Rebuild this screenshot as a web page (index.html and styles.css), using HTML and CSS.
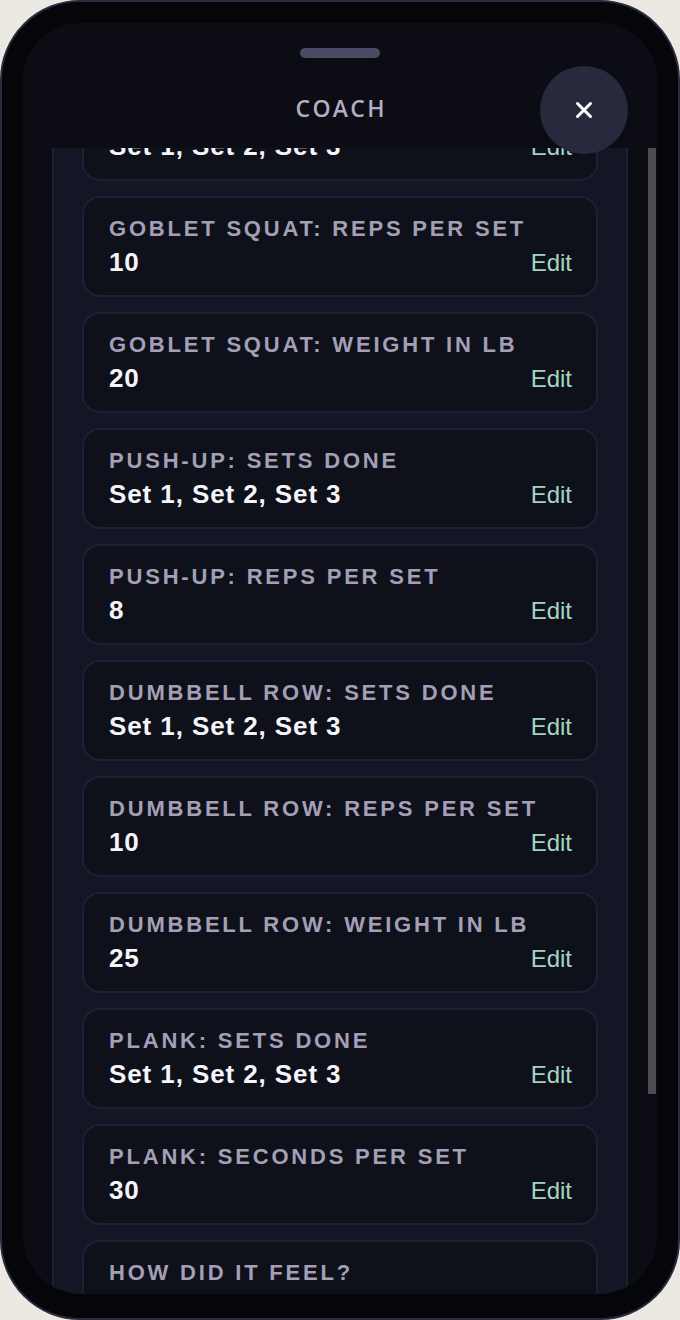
FILE: index.html
```html
<!DOCTYPE html>
<html lang="en">
<head>
<meta charset="utf-8">
<title>Coach</title>
<link rel="stylesheet" href="styles.css">
</head>
<body>
<div class="phone">
  <div class="screen">
    <header class="sheet-header">
      <div class="handle"></div>
      <h1 class="title">COACH</h1>
      <button class="close" aria-label="Close">
        <svg width="18" height="18" viewBox="0 0 18 18"><path d="M2.5 2.5 L15.5 15.5 M15.5 2.5 L2.5 15.5" stroke="#ffffff" stroke-width="3" stroke-linecap="round" fill="none"/></svg>
      </button>
    </header>
    <div class="list">
      <div class="panel">
        <div class="cards">
          <div class="card">
            <div class="label">GOBLET SQUAT: SETS DONE</div>
            <div class="row"><span class="value">Set 1, Set 2, Set 3</span><span class="edit">Edit</span></div>
          </div>
          <div class="card">
            <div class="label">GOBLET SQUAT: REPS PER SET</div>
            <div class="row"><span class="value">10</span><span class="edit">Edit</span></div>
          </div>
          <div class="card">
            <div class="label">GOBLET SQUAT: WEIGHT IN LB</div>
            <div class="row"><span class="value">20</span><span class="edit">Edit</span></div>
          </div>
          <div class="card">
            <div class="label">PUSH-UP: SETS DONE</div>
            <div class="row"><span class="value">Set 1, Set 2, Set 3</span><span class="edit">Edit</span></div>
          </div>
          <div class="card">
            <div class="label">PUSH-UP: REPS PER SET</div>
            <div class="row"><span class="value">8</span><span class="edit">Edit</span></div>
          </div>
          <div class="card">
            <div class="label">DUMBBELL ROW: SETS DONE</div>
            <div class="row"><span class="value">Set 1, Set 2, Set 3</span><span class="edit">Edit</span></div>
          </div>
          <div class="card">
            <div class="label">DUMBBELL ROW: REPS PER SET</div>
            <div class="row"><span class="value">10</span><span class="edit">Edit</span></div>
          </div>
          <div class="card">
            <div class="label">DUMBBELL ROW: WEIGHT IN LB</div>
            <div class="row"><span class="value">25</span><span class="edit">Edit</span></div>
          </div>
          <div class="card">
            <div class="label">PLANK: SETS DONE</div>
            <div class="row"><span class="value">Set 1, Set 2, Set 3</span><span class="edit">Edit</span></div>
          </div>
          <div class="card">
            <div class="label">PLANK: SECONDS PER SET</div>
            <div class="row"><span class="value">30</span><span class="edit">Edit</span></div>
          </div>
          <div class="card">
            <div class="label">HOW DID IT FEEL?</div>
            <div class="row"><span class="value">Good</span><span class="edit">Edit</span></div>
          </div>
        </div>
      </div>
      <div class="thumb"></div>
    </div>
  </div>
</div>
</body>
</html>
```

FILE: styles.css
```css
* { box-sizing: border-box; }

html, body {
  margin: 0;
  padding: 0;
}

body {
  width: 680px;
  height: 1320px;
  background: #ece9e3;
  font-family: "Liberation Sans", Arial, sans-serif;
  overflow: hidden;
}

.phone {
  width: 680px;
  height: 1320px;
  border-radius: 80px;
  background: #050609;
  border: 2px solid #2b2a3e;
  padding: 21px 21px 24px 21px;
  display: flex;
}

.screen {
  flex: 1;
  border-radius: 58px;
  background: #0b0c14;
  overflow: hidden;
  display: flex;
  flex-direction: column;
}

.sheet-header {
  position: relative;
  flex: 0 0 125px;
  height: 125px;
  display: flex;
  flex-direction: column;
  align-items: center;
  padding-top: 25px;
  background: #0b0c14;
  z-index: 2;
}

.handle {
  width: 80px;
  height: 10px;
  border-radius: 5px;
  background: #4a4c65;
}

.title {
  margin: 35px 0 0 0;
  font-family: "Open Sans", "Noto Sans", sans-serif;
  font-weight: 600;
  font-size: 23px;
  line-height: 30px;
  letter-spacing: 0.1em;
  color: #b3adc3;
  padding-left: 0.1em;
}

.close {
  position: absolute;
  top: 43px;
  right: 29px;
  width: 88px;
  height: 88px;
  border-radius: 50%;
  border: none;
  background: #272a3c;
  display: flex;
  align-items: center;
  justify-content: center;
  padding: 0;
  z-index: 3;
}

.close svg { display: block; }

.list {
  position: relative;
  flex: 1;
  overflow: hidden;
  display: flex;
  justify-content: center;
}

.panel {
  width: 576px;
  background: #141626;
  border-left: 2px solid #1d2034;
  border-right: 2px solid #1d2034;
  padding: 0 28px;
}

.cards {
  margin-top: -68px;
  display: flex;
  flex-direction: column;
  gap: 15px;
}

.card {
  height: 101px;
  background: #0e101a;
  border: 2px solid #1e2134;
  border-radius: 18px;
  padding: 18px 24px 18px 25px;
}

.label {
  font-weight: 700;
  font-size: 22px;
  line-height: 26px;
  letter-spacing: 2.8px;
  color: #a49fb6;
  white-space: nowrap;
}

.row {
  margin-top: 6px;
  display: flex;
  justify-content: space-between;
  align-items: baseline;
}

.value {
  font-weight: 700;
  font-size: 26px;
  line-height: 28px;
  letter-spacing: 0.9px;
  color: #f5f5f9;
}

.edit {
  font-size: 24px;
  line-height: 28px;
  color: #a3d6c2;
}

.thumb {
  position: absolute;
  top: 0;
  right: 1px;
  width: 8px;
  height: 946px;
  background: #4c4c51;
}
```
